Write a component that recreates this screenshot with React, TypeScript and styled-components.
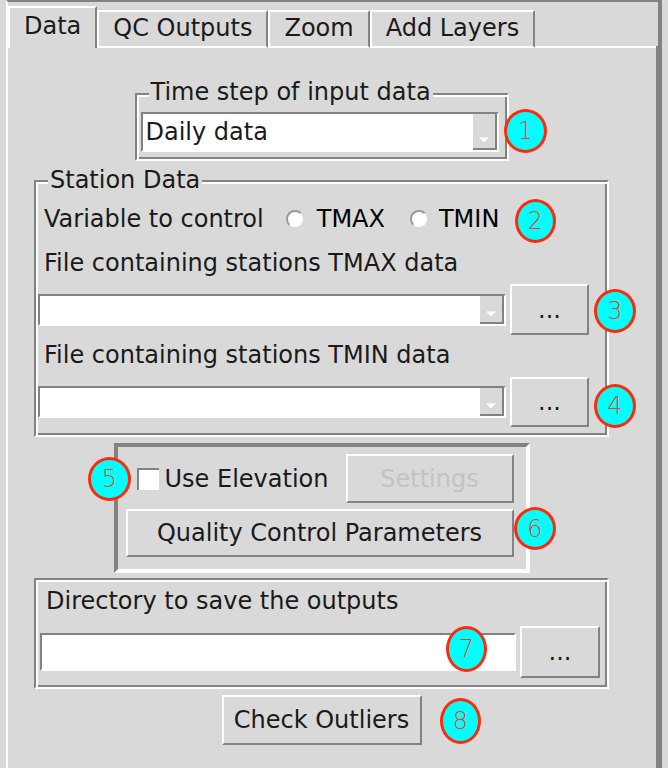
import React from 'react';
import styled, { createGlobalStyle, css } from 'styled-components';

const GRAY = '#828282';
const BG = '#d9d9d9';
const WHITE = '#ffffff';
const INK = '#1a1a1a';

const GlobalStyle = createGlobalStyle`
  html, body { margin: 0; padding: 0; background: ${BG}; }
  * { box-sizing: border-box; }
`;

const Root = styled.div`
  position: relative;
  width: 668px;
  height: 768px;
  overflow: hidden;
  background: ${BG};
  font-family: "DejaVu Sans", "Noto Sans", sans-serif;
  font-size: 24px;
  color: ${INK};
`;

const Window = styled.div`
  margin-left: 6px;
  width: 656px;
  height: 768px;
  border-top: 2px solid ${GRAY};
  border-left: 2px solid ${WHITE};
  border-right: 4px solid ${GRAY};
  display: flex;
  flex-direction: column;
`;

const TabBar = styled.div`
  display: flex;
  align-items: flex-end;
  padding-top: 4px;
`;

const Tab = styled.div<{ $active?: boolean }>`
  padding: 0 14px;
  line-height: 32px;
  white-space: nowrap;
  border-top: 2px solid ${WHITE};
  border-left: 2px solid ${WHITE};
  border-right: 2px solid ${GRAY};
  ${(p) =>
    p.$active
      ? css`
          padding-top: 2px;
          padding-bottom: 6px;
        `
      : css`
          padding-bottom: 2px;
          border-bottom: 2px solid ${WHITE};
        `}
`;

const TabFiller = styled.div`
  flex: 1;
  height: 2px;
  background: ${WHITE};
  border-right: 2px solid ${GRAY};
`;

const Pane = styled.div`
  flex: 1;
  border-right: 2px solid ${GRAY};
  padding-left: 26px;
`;

const Column = styled.div`
  width: 575px;
  display: flex;
  flex-direction: column;
  align-items: center;
`;

const FrameWrap = styled.div<{ $w: number; $mt: number; $pt: number }>`
  position: relative;
  width: ${(p) => p.$w}px;
  margin-top: ${(p) => p.$mt}px;
  padding-top: ${(p) => p.$pt}px;
`;

const Legend = styled.span`
  position: absolute;
  top: 0;
  left: 14px;
  padding: 0 2px;
  line-height: 28px;
  background: ${BG};
  white-space: nowrap;
`;

const Groove = styled.div<{ $pad: string }>`
  border: 2px solid;
  border-color: ${GRAY} ${WHITE} ${WHITE} ${GRAY};
  box-shadow: inset 2px 2px 0 ${WHITE}, inset -2px -2px 0 ${GRAY};
  padding: ${(p) => p.$pad};
  display: flex;
  flex-direction: column;
  align-items: flex-start;
`;

const TextLine = styled.div<{ $mt?: number }>`
  line-height: 28px;
  height: 28px;
  padding-left: 6px;
  margin-top: ${(p) => p.$mt ?? 0}px;
  white-space: nowrap;
`;

const RadioRow = styled.div`
  display: flex;
  align-items: center;
  height: 28px;
  line-height: 28px;
  padding-left: 6px;
  white-space: nowrap;
`;

const RadioItem = styled.label<{ $ml: number; $gap: number }>`
  display: flex;
  align-items: center;
  margin-left: ${(p) => p.$ml}px;
  gap: ${(p) => p.$gap}px;
  color: #000;
`;

const Row = styled.div<{ $mt: number; $h: number; $gap: number }>`
  display: flex;
  align-items: center;
  margin-top: ${(p) => p.$mt}px;
  height: ${(p) => p.$h}px;
  gap: ${(p) => p.$gap}px;
`;

const Combo = styled.div<{ $w: number; $h: number }>`
  display: flex;
  width: ${(p) => p.$w}px;
  height: ${(p) => p.$h}px;
  border: 2px solid;
  border-color: ${GRAY} ${WHITE} ${WHITE} ${GRAY};
  background: ${WHITE};
`;

const ComboText = styled.div`
  flex: 1;
  padding-left: 3px;
  display: flex;
  align-items: center;
  white-space: nowrap;
`;

const ComboArrow = styled.div`
  width: 24px;
  background: ${BG};
  border-right: 2px solid ${GRAY};
  border-bottom: 2px solid ${GRAY};
  display: flex;
  align-items: flex-end;
  justify-content: center;
  padding-bottom: 5px;
`;

const Entry = styled.div<{ $w: number; $h: number }>`
  width: ${(p) => p.$w}px;
  height: ${(p) => p.$h}px;
  border: 2px solid;
  border-color: ${GRAY} ${WHITE} ${WHITE} ${GRAY};
  background: ${WHITE};
`;

const Button = styled.button<{ $w?: number; $h: number; $muted?: boolean }>`
  ${(p) => (p.$w ? `width: ${p.$w}px;` : '')}
  height: ${(p) => p.$h}px;
  padding: 0;
  background: ${BG};
  border: 2px solid;
  border-color: ${WHITE} ${GRAY} ${GRAY} ${WHITE};
  font-family: inherit;
  font-size: 24px;
  color: ${(p) => (p.$muted ? '#c4c4c4' : INK)};
  display: flex;
  align-items: center;
  justify-content: center;
  white-space: nowrap;
`;

const SunkenBox = styled.div`
  width: 416px;
  margin-top: 6px;
  border: 4px solid;
  border-color: ${GRAY} ${WHITE} ${WHITE} ${GRAY};
  padding: 7px 12px 12px 8px;
  display: grid;
  grid-template-columns: 214px 168px;
  column-gap: 6px;
  row-gap: 6px;
`;

const CheckCell = styled.label`
  display: flex;
  align-items: center;
  justify-content: center;
  gap: 6px;
  white-space: nowrap;
`;

const CheckBox = styled.span`
  width: 22px;
  height: 22px;
  background: ${WHITE};
  border-top: 2px solid ${GRAY};
  border-left: 2px solid ${GRAY};
`;

const WideCell = styled.div`
  grid-column: 1 / -1;
  display: flex;
  flex-direction: column;
`;

const BottomButtonWrap = styled.div`
  margin-top: 6px;
`;

const Badge = styled.div<{ $x: number; $y: number; $w: number; $h: number }>`
  position: absolute;
  left: ${(p) => p.$x}px;
  top: ${(p) => p.$y}px;
  width: ${(p) => p.$w}px;
  height: ${(p) => p.$h}px;
  border-radius: 50%;
  background: #00ffff;
  border: 3px solid #ff2a0a;
  color: #e8442a;
  font-family: "DejaVu Sans", sans-serif;
  font-weight: 200;
  font-size: 24px;
  display: flex;
  align-items: center;
  justify-content: center;
`;

const RadioIcon = () => (
  <svg width="18" height="18" viewBox="0 0 18 18">
    <circle cx="9" cy="9" r="8" fill="#ffffff" />
    <path d="M3.3 14.7 A8 8 0 0 1 14.7 3.3" fill="none" stroke="#9a9a9a" strokeWidth="2" />
  </svg>
);

const DownArrow = () => (
  <svg width="12" height="6" viewBox="0 0 12 6">
    <polygon points="0,0 12,0 6,6" fill="#ffffff" stroke="#c8c8c8" strokeWidth="0.6" />
  </svg>
);

const badges = [
  { n: 1, x: 504, y: 109, w: 43, h: 44 },
  { n: 2, x: 515, y: 199, w: 41, h: 44 },
  { n: 3, x: 594, y: 289, w: 42, h: 44 },
  { n: 4, x: 594, y: 384, w: 42, h: 44 },
  { n: 5, x: 88, y: 457, w: 43, h: 44 },
  { n: 6, x: 514, y: 507, w: 42, h: 43 },
  { n: 7, x: 446, y: 626, w: 41, h: 46 },
  { n: 8, x: 440, y: 698, w: 41, h: 46 },
];

export default function App() {
  return (
    <Root>
      <GlobalStyle />
      <Window>
        <TabBar>
          <Tab $active>Data</Tab>
          <Tab>QC Outputs</Tab>
          <Tab>Zoom</Tab>
          <Tab>Add Layers</Tab>
          <TabFiller />
        </TabBar>
        <Pane>
          <Column>
            <FrameWrap $w={374} $mt={30} $pt={15}>
              <Legend>Time step of input data</Legend>
              <Groove $pad="17px 8px 7px 4px">
                <Combo $w={358} $h={40}>
                  <ComboText>Daily data</ComboText>
                  <ComboArrow>
                    <DownArrow />
                  </ComboArrow>
                </Combo>
              </Groove>
            </FrameWrap>

            <FrameWrap $w={575} $mt={5} $pt={14}>
              <Legend>Station Data</Legend>
              <Groove $pad="23px 2px 8px 2px">
                <RadioRow>
                  Variable to control
                  <RadioItem $ml={22} $gap={13}>
                    <RadioIcon />
                    TMAX
                  </RadioItem>
                  <RadioItem $ml={25} $gap={11}>
                    <RadioIcon />
                    TMIN
                  </RadioItem>
                </RadioRow>
                <TextLine $mt={16}>File containing stations TMAX data</TextLine>
                <Row $mt={7} $h={51} $gap={4}>
                  <Combo $w={468} $h={32}>
                    <ComboText />
                    <ComboArrow>
                      <DownArrow />
                    </ComboArrow>
                  </Combo>
                  <Button $w={79} $h={51}>...</Button>
                </Row>
                <TextLine $mt={6}>File containing stations TMIN data</TextLine>
                <Row $mt={8} $h={50} $gap={4}>
                  <Combo $w={468} $h={32}>
                    <ComboText />
                    <ComboArrow>
                      <DownArrow />
                    </ComboArrow>
                  </Combo>
                  <Button $w={79} $h={50}>...</Button>
                </Row>
              </Groove>
            </FrameWrap>

            <SunkenBox>
              <CheckCell>
                <CheckBox />
                Use Elevation
              </CheckCell>
              <Button $h={49} $muted>Settings</Button>
              <WideCell>
                <Button $h={48}>Quality Control Parameters</Button>
              </WideCell>
            </SunkenBox>

            <FrameWrap $w={575} $mt={5} $pt={0}>
              <Groove $pad="7px 2px 9px 4px">
                <TextLine>Directory to save the outputs</TextLine>
                <Row $mt={11} $h={52} $gap={4}>
                  <Entry $w={476} $h={38} />
                  <Button $w={80} $h={52}>...</Button>
                </Row>
              </Groove>
            </FrameWrap>

            <BottomButtonWrap>
              <Button $w={200} $h={50}>Check Outliers</Button>
            </BottomButtonWrap>
          </Column>
        </Pane>
      </Window>
      {badges.map((b) => (
        <Badge key={b.n} $x={b.x} $y={b.y} $w={b.w} $h={b.h}>
          {b.n}
        </Badge>
      ))}
    </Root>
  );
}
